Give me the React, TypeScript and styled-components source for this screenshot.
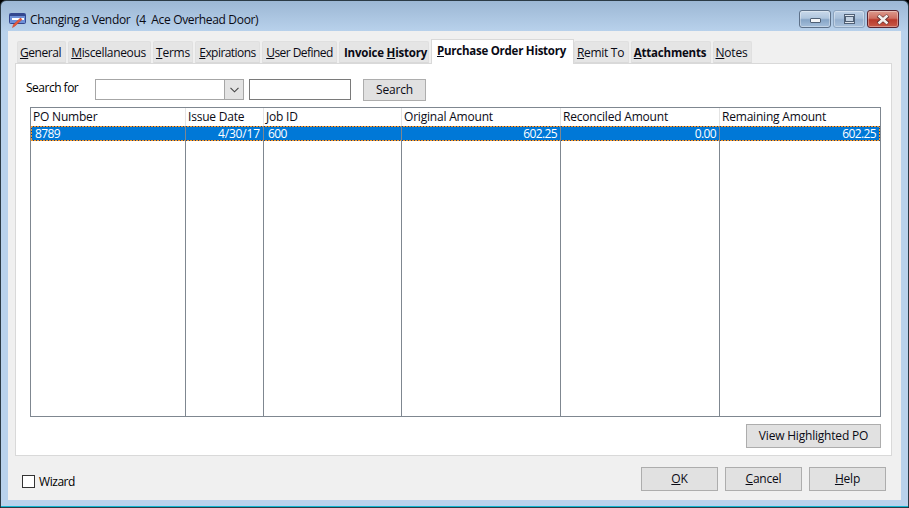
import React from "react";
import styled, { createGlobalStyle } from "styled-components";

const Global = createGlobalStyle`
  html, body { margin: 0; padding: 0; background: #000; }
  body { width: 909px; height: 508px; overflow: hidden; font-family: "Open Sans", "Noto Sans", sans-serif; font-size: 12px; color: #000; }
  * { box-sizing: border-box; }
`;

const Win = styled.div`
  width: 909px;
  height: 508px;
  display: flex;
  flex-direction: column;
  background: linear-gradient(#9cb7d4 0px, #b9d2ec 31px, #b9d2ec 100%);
  border: 1px solid #2b3a45;
  border-radius: 6px 6px 0 0;
  box-shadow: inset 0 -1px 0 #12b5cf;
  padding: 0 7px 7px 7px;
`;

const TitleBar = styled.div`
  height: 30px;
  flex: none;
  display: flex;
  align-items: flex-start;
  padding-left: 1px;
`;

const TitleText = styled.div`
  margin: 10px 0 0 3px;
  font-size: 12px;
  letter-spacing: -0.33px;
  line-height: 18px;
  white-space: pre;
  color: #0a0a14;
`;

const Controls = styled.div`
  margin-left: auto;
  margin-top: 9px;
  margin-right: 2px;
  display: flex;
  gap: 2px;
`;

const Ctl = styled.div<{ $w: number; $close?: boolean; $dim?: boolean }>`
  width: ${(p) => p.$w}px;
  height: 18px;
  border: 1px solid ${(p) => (p.$close ? "#5a2430" : p.$dim ? "#8ca4bf" : "#5d7189")};
  border-radius: 3px;
  background: ${(p) =>
    p.$close
      ? "linear-gradient(#dc9a8d 0%, #cf6f62 45%, #b93a2c 55%, #c85a48 100%)"
      : p.$dim
      ? "linear-gradient(#bed1e6 0%, #a8c0da 45%, #95b0cf 55%, #a9c2dc 100%)"
      : "linear-gradient(#c9d9ea 0%, #afc6de 45%, #86a5c6 55%, #a5bfdb 100%)"};
  box-shadow: inset 0 0 0 1px rgba(255, 255, 255, 0.35);
  display: flex;
  align-items: center;
  justify-content: center;
`;

const MinGlyph = styled.div`
  width: 11px;
  height: 5px;
  margin-top: 3px;
  background: #f4f6f8;
  border: 1px solid #4f6075;
  border-radius: 1px;
`;

const MaxGlyph = styled.div`
  width: 11px;
  height: 10px;
  border: 1px solid #4f6075;
  background: #dfe6ee;
  display: flex;
  align-items: center;
  justify-content: center;
  &::after {
    content: "";
    width: 7px;
    height: 4px;
    border: 1px solid #4f6075;
    background: #c4d3e3;
  }
`;

const Client = styled.div`
  flex: 1;
  min-height: 0;
  background: #f0f0f0;
  padding: 8px 9px 0 7px;
  display: flex;
  flex-direction: column;
`;

const TabStrip = styled.div`
  height: 24px;
  flex: none;
  display: flex;
  align-items: flex-end;
  padding-left: 2px;
  position: relative;
  z-index: 1;
`;

const Tab = styled.div<{ $w: number; $bold?: boolean; $active?: boolean; $ls: number; $nudge: number }>`
  width: ${(p) => p.$w}px;
  flex: none;
  height: ${(p) => (p.$active ? 25 : 22)}px;
  margin-right: ${(p) => (p.$active ? 0 : 2)}px;
  margin-bottom: ${(p) => (p.$active ? -1 : 0)}px;
  background: ${(p) => (p.$active ? "#fff" : "#e5e5e5")};
  border: 1px solid ${(p) => (p.$active ? "#d9d9d9" : "#e0e0e0")};
  border-bottom: ${(p) => (p.$active ? "none" : "1px solid #d9d9d9")};
  border-radius: ${(p) => (p.$active ? "0" : "2px 2px 0 0")};
  font-weight: ${(p) => (p.$bold ? 700 : 400)};
  font-size: ${(p) => (p.$bold ? 11.5 : 12)}px;
  letter-spacing: ${(p) => p.$ls}px;
  display: flex;
  justify-content: center;
  align-items: flex-start;
  padding-top: 2px;
  padding-left: ${(p) => Math.max(p.$nudge, 0)}px;
  padding-right: ${(p) => Math.max(-p.$nudge, 0)}px;
  line-height: 17px;
  white-space: nowrap;
  color: #0a0a14;
`;

const Panel = styled.div`
  height: 393px;
  flex: none;
  background: #fff;
  border: 1px solid #d9d9d9;
  padding: 0 10px 0 14px;
  display: flex;
  flex-direction: column;
`;

const SearchRow = styled.div`
  height: 43px;
  flex: none;
  display: flex;
  align-items: flex-start;
  padding-top: 15px;
`;

const SearchLabel = styled.div`
  width: 69px;
  line-height: 17px;
  letter-spacing: -0.5px;
  margin-left: -4px;
  flex: none;
`;

const Combo = styled.div`
  width: 149px;
  height: 21px;
  flex: none;
  border: 1px solid #a6a6a6;
  display: flex;
  justify-content: flex-end;
`;

const ComboArrow = styled.div`
  width: 19px;
  background: #e3e3e3;
  border-left: 1px solid #a6a6a6;
  display: flex;
  align-items: center;
  justify-content: center;
`;

const Field = styled.div`
  width: 102px;
  height: 21px;
  flex: none;
  margin-left: 5px;
  border: 1px solid #7a7a7a;
`;

const Btn = styled.div<{ $w: number }>`
  width: ${(p) => p.$w}px;
  height: 24px;
  flex: none;
  background: #e1e1e1;
  border: 1px solid #adadad;
  padding-bottom: 2px;
  display: flex;
  align-items: center;
  justify-content: center;
  letter-spacing: -0.2px;
  color: #0a0a14;
`;

const SearchBtn = styled(Btn)`
  margin-left: 12px;
  height: 22px;
`;

const Table = styled.div`
  width: 851px;
  height: 310px;
  flex: none;
  border: 1px solid #7f8790;
  display: flex;
  flex-direction: column;
  background: #fff;
`;

const cols = "155px 78px 138px 159px 159px 1fr";

const HeadRow = styled.div`
  display: grid;
  grid-template-columns: ${cols};
  height: 18px;
  flex: none;
`;

const HeadCell = styled.div`
  border-right: 1px solid #e4e4e4;
  padding-left: 2px;
  line-height: 17px;
  letter-spacing: -0.2px;
  white-space: nowrap;
  color: #0a0a14;
  &:last-child { border-right: none; }
`;

const dotH = "repeating-linear-gradient(90deg, #f59a2c 0 2px, #20406f 2px 3px)";
const dotV = "repeating-linear-gradient(180deg, #f59a2c 0 2px, #20406f 2px 3px)";

const DataRow = styled.div`
  display: grid;
  grid-template-columns: ${cols};
  height: 15px;
  flex: none;
  background-color: #0078d7;
  background-image: ${dotH}, ${dotH}, ${dotV}, ${dotV};
  background-size: 100% 1px, 100% 1px, 1px 100%, 1px 100%;
  background-position: 0 0, 0 100%, 0 0, 100% 0;
  background-repeat: no-repeat;
  color: #fff;
`;

const DataCell = styled.div<{ $right?: boolean; $tight?: boolean }>`
  border-right: 1px solid #7f8790;
  padding: 1px 3px 0 4px;
  text-align: ${(p) => (p.$right ? "right" : "left")};
  line-height: 14px;
  letter-spacing: ${(p) => (p.$tight ? -0.6 : -0.15)}px;
  white-space: nowrap;
  &:last-child { border-right: none; padding-right: 4px; }
`;

const FillRow = styled.div`
  flex: 1;
  display: grid;
  grid-template-columns: ${cols};
`;

const FillCell = styled.div`
  border-right: 1px solid #7f8790;
  &:last-child { border-right: none; }
`;

const PanelFoot = styled.div`
  display: flex;
  justify-content: flex-end;
  padding-top: 7px;
  width: 851px;
`;

const Footer = styled.div`
  flex: 1;
  display: flex;
  align-items: flex-start;
  padding: 11px 6px 0 7px;
`;

const Wizard = styled.div`
  display: flex;
  align-items: center;
  margin-top: 6px;
`;

const Check = styled.div`
  width: 13px;
  height: 13px;
  border: 1px solid #333;
  background: #fff;
  margin-right: 4px;
`;

const WizardLabel = styled.div`
  line-height: 17px;
  letter-spacing: -0.45px;
`;

const FootBtns = styled.div`
  margin-left: auto;
  display: flex;
  gap: 7px;
`;

const IconSvg = styled.svg`
  margin-top: 11px;
  flex: none;
`;

const Appicon = () => (
  <IconSvg width="18" height="17" viewBox="0 0 18 17">
    <rect x="0.5" y="1.5" width="16" height="10" rx="1" fill="#6d8fd8" stroke="#33478f" />
    <rect x="1" y="2" width="15" height="2" fill="#33478f" />
    <rect x="3" y="6" width="8" height="2" fill="#fff" />
    <rect x="12" y="6" width="3" height="2" fill="#fff" />
    <path d="M13 7.5 L6 14 L3.5 15.5 L4.5 12.5 L11.5 6 Z" fill="#e8593a" stroke="#c23e22" strokeWidth="0.5" />
  </IconSvg>
);

const tabs: { k: string; rest: string; w: number; ls: number; nudge: number; bold?: boolean; active?: boolean; pre?: string }[] = [
  { k: "G", rest: "eneral", w: 49, ls: -0.45, nudge: -2 },
  { k: "M", rest: "iscellaneous", w: 83, ls: -0.35, nudge: -2 },
  { k: "T", rest: "erms", w: 40, ls: -0.2, nudge: 0 },
  { k: "E", rest: "xpirations", w: 65, ls: -0.55, nudge: 0 },
  { k: "U", rest: "ser Defined", w: 75, ls: -0.55, nudge: 0 },
  { pre: "Invoice ", k: "H", rest: "istory", w: 90, bold: true, ls: -0.2, nudge: 3 },
  { k: "P", rest: "urchase Order History", w: 143, bold: true, active: true, ls: -0.25, nudge: -2 },
  { k: "R", rest: "emit To", w: 55, ls: -0.3, nudge: -2 },
  { k: "A", rest: "ttachments", w: 80, bold: true, ls: -0.2, nudge: -2 },
  { k: "N", rest: "otes", w: 39, ls: -0.2, nudge: -2 },
];

const row = ["8789", "4/30/17", "600", "602.25", "0.00", "602.25"];
const heads = ["PO Number", "Issue Date", "Job ID", "Original Amount", "Reconciled Amount", "Remaining Amount"];

export default function App() {
  return (
    <>
      <Global />
      <Win>
        <TitleBar>
          <Appicon />
          <TitleText>Changing a Vendor  (4  Ace Overhead Door)</TitleText>
          <Controls>
            <Ctl $w={32}><MinGlyph /></Ctl>
            <Ctl $w={32} $dim><MaxGlyph /></Ctl>
            <Ctl $w={32} $close>
              <svg width="14" height="11" viewBox="0 0 14 11">
                <path d="M2 1.5 L12 9.5 M12 1.5 L2 9.5" stroke="#5a2a2a" strokeWidth="4" />
                <path d="M2.5 1.5 L11.5 9.5 M11.5 1.5 L2.5 9.5" stroke="#f4f0ee" strokeWidth="2.6" />
              </svg>
            </Ctl>
          </Controls>
        </TitleBar>
        <Client>
          <TabStrip>
            {tabs.map((t) => (
              <Tab key={t.k + t.rest} $w={t.w} $bold={t.bold} $active={t.active} $ls={t.ls} $nudge={t.nudge}>
                <span>
                  {t.pre}
                  <u>{t.k}</u>
                  {t.rest}
                </span>
              </Tab>
            ))}
          </TabStrip>
          <Panel>
            <SearchRow>
              <SearchLabel>Search for</SearchLabel>
              <Combo>
                <ComboArrow>
                  <svg width="9" height="6" viewBox="0 0 9 6">
                    <path d="M0.5 0.8 L4.5 4.8 L8.5 0.8" fill="none" stroke="#444" strokeWidth="1.1" />
                  </svg>
                </ComboArrow>
              </Combo>
              <Field />
              <SearchBtn $w={63}>Search</SearchBtn>
            </SearchRow>
            <Table>
              <HeadRow>
                {heads.map((h) => (
                  <HeadCell key={h}>{h}</HeadCell>
                ))}
              </HeadRow>
              <DataRow>
                {row.map((c, i) => (
                  <DataCell key={i} $right={i === 1 || i > 2} $tight={i !== 1}>
                    {c}
                  </DataCell>
                ))}
              </DataRow>
              <FillRow>
                {heads.map((h) => (
                  <FillCell key={h} />
                ))}
              </FillRow>
            </Table>
            <PanelFoot>
              <Btn $w={135}>View Highlighted PO</Btn>
            </PanelFoot>
          </Panel>
          <Footer>
            <Wizard>
              <Check />
              <WizardLabel>Wizard</WizardLabel>
            </Wizard>
            <FootBtns>
              <Btn $w={77}><span><u>O</u>K</span></Btn>
              <Btn $w={77}><span><u>C</u>ancel</span></Btn>
              <Btn $w={77}><span><u>H</u>elp</span></Btn>
            </FootBtns>
          </Footer>
        </Client>
      </Win>
    </>
  );
}
